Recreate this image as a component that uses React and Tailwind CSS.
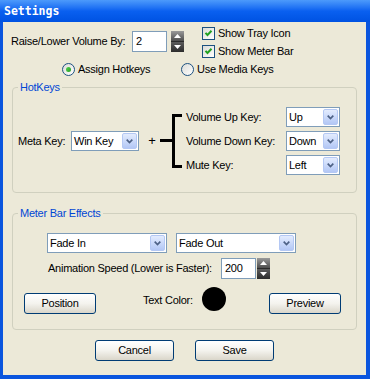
import React from 'react';

function Combo({ value, className }) {
  return (
    <div className={`flex h-[20px] border border-[#7F9DB9] bg-white ${className}`}>
      <span className="flex-1 pl-[2px] leading-[18px]">{value}</span>
      <span className="m-px flex w-[15px] items-center justify-center rounded-[2px] border border-[#B4C8F4] bg-gradient-to-b from-[#E3ECFE] to-[#B3C7F5]">
        <svg width="7" height="5" viewBox="0 0 7 5">
          <path d="M0.7 0.7 L3.5 3.5 L6.3 0.7" stroke="#4D6185" strokeWidth="1.7" fill="none" />
        </svg>
      </span>
    </div>
  );
}

function Spinner() {
  return (
    <div className="flex h-[21px] w-[13px] flex-col">
      <div className="flex h-[11px] items-center justify-center border-b border-[#2a2a2a] bg-gradient-to-b from-[#9a9a9a] to-[#4e4e4e]">
        <svg width="7" height="4" viewBox="0 0 7 4">
          <path d="M0 4 L3.5 0 L7 4 Z" fill="#ffffff" />
        </svg>
      </div>
      <div className="flex flex-1 items-center justify-center bg-gradient-to-b from-[#5c5c5c] to-[#2c2c2c]">
        <svg width="7" height="4" viewBox="0 0 7 4">
          <path d="M0 0 L3.5 4 L7 0 Z" fill="#ffffff" />
        </svg>
      </div>
    </div>
  );
}

function Check({ label }) {
  return (
    <div className="flex h-[13px] items-center">
      <span className="flex h-[13px] w-[13px] items-center justify-center border border-[#1C5180] bg-gradient-to-br from-[#DCDCD7] to-white">
        <svg width="9" height="9" viewBox="0 0 9 9">
          <path d="M1.5 3.8 L3.5 6 L7.5 1.8" stroke="#21A121" strokeWidth="2" fill="none" />
        </svg>
      </span>
      <span className="ml-[3px] leading-[13px]">{label}</span>
    </div>
  );
}

function Radio({ label, checked, className }) {
  return (
    <div className={`flex h-[13px] items-center ${className}`}>
      <span className="flex h-[13px] w-[13px] items-center justify-center rounded-full border border-[#1C5180] bg-gradient-to-br from-[#DCDCD7] to-white">
        {checked && <span className="h-[5px] w-[5px] rounded-full bg-gradient-to-br from-[#55D551] to-[#1E9C1E]" />}
      </span>
      <span className="ml-[3px] leading-[13px]">{label}</span>
    </div>
  );
}

function Button({ children, className }) {
  return (
    <div className={`flex h-[21px] items-center justify-center rounded-[3px] border border-[#003C74] bg-gradient-to-b from-white via-[#F4F3EE] to-[#DAD6CA] ${className}`}>
      {children}
    </div>
  );
}

export default function App() {
  return (
    <div className="flex h-[379px] w-[370px] flex-col bg-[#0A55DE] font-['Liberation_Sans',Arial,sans-serif] text-[11px] tracking-[-0.25px] text-black">
      {/* title bar */}
      <div className="flex h-[22px] items-center bg-gradient-to-b from-[#4C9AFB] via-[#0A60F0] to-[#0052E2] pl-[4px] pt-px">
        <span className="font-['DejaVu_Sans_Mono',monospace] text-[11.5px] font-bold tracking-normal text-white">Settings</span>
      </div>

      <div className="mb-[4px] ml-[3px] mr-[4px] flex flex-1 flex-col bg-[#ECE9D8] pt-[5px]">
        {/* volume row */}
        <div className="flex items-start">
          <div className="mt-[4px] flex items-center pl-[8px]">
            <span className="w-[121px]">Raise/Lower Volume By:</span>
            <div className="flex h-[21px] w-[35px] items-center border border-[#7F9DB9] bg-white pl-[3px]">2</div>
            <div className="ml-[4px]">
              <Spinner />
            </div>
          </div>
          <div className="ml-[18px] flex flex-col gap-[5px]">
            <Check label="Show Tray Icon" />
            <Check label="Show Meter Bar" />
          </div>
        </div>

        {/* radios */}
        <div className="mt-[5px] flex pl-[59px]">
          <Radio label="Assign Hotkeys" checked className="w-[119px]" />
          <Radio label="Use Media Keys" />
        </div>

        {/* HotKeys */}
        <fieldset className="mx-[9px] mt-[5px] rounded-[4px] border border-[#D0D0BF] pb-[17px]">
          <legend className="ml-[5px] px-[2px] leading-[13px] text-[#0046D5]">HotKeys</legend>
          <div className="flex items-center pl-[5px] pt-[13px]">
            <span className="w-[53px]">Meta Key:</span>
            <Combo value="Win Key" className="w-[68px]" />
            <span className="ml-[6px] w-[14px] text-center text-[13px]">+</span>
            <svg width="22" height="56" viewBox="0 0 22 56" className="ml-px">
              <rect x="12" y="1" width="3" height="54" fill="#000" />
              <rect x="12" y="1" width="10" height="3" fill="#000" />
              <rect x="12" y="52" width="10" height="3" fill="#000" />
              <rect x="0" y="26" width="13" height="3" fill="#000" />
            </svg>
            <div className="ml-[4px] flex w-[100px] flex-col gap-[4px]">
              <span className="leading-[20px]">Volume Up Key:</span>
              <span className="leading-[20px]">Volume Down Key:</span>
              <span className="leading-[20px]">Mute Key:</span>
            </div>
            <div className="flex flex-col gap-[4px]">
              <Combo value="Up" className="w-[54px]" />
              <Combo value="Down" className="w-[54px]" />
              <Combo value="Left" className="w-[54px]" />
            </div>
          </div>
        </fieldset>

        {/* Meter Bar Effects */}
        <fieldset className="mx-[9px] mt-[14px] rounded-[4px] border border-[#D0D0BF] pb-[15px]">
          <legend className="ml-[5px] px-[2px] leading-[13px] text-[#0046D5]">Meter Bar Effects</legend>
          <div className="flex gap-[9px] pl-[34px] pt-[13px]">
            <Combo value="Fade In" className="w-[120px]" />
            <Combo value="Fade Out" className="w-[120px]" />
          </div>
          <div className="mt-[5px] flex items-center pl-[35px]">
            <span className="w-[173px]">Animation Speed (Lower is Faster):</span>
            <div className="flex h-[21px] w-[35px] items-center border border-[#7F9DB9] bg-white pl-[3px]">200</div>
            <div className="ml-px">
              <Spinner />
            </div>
          </div>
          <div className="mt-[8px] flex items-start pl-[11px]">
            <Button className="mt-[6px] w-[72px]">Position</Button>
            <span className="ml-[47px] mt-[7px] w-[59px] leading-[13px]">Text Color:</span>
            <span className="h-[24px] w-[24px] rounded-full bg-black" />
            <Button className="ml-[43px] mt-[6px] w-[72px]">Preview</Button>
          </div>
        </fieldset>

        <div className="mt-[10px] flex justify-center gap-[21px]">
          <Button className="w-[79px]">Cancel</Button>
          <Button className="w-[79px]">Save</Button>
        </div>
      </div>
    </div>
  );
}
